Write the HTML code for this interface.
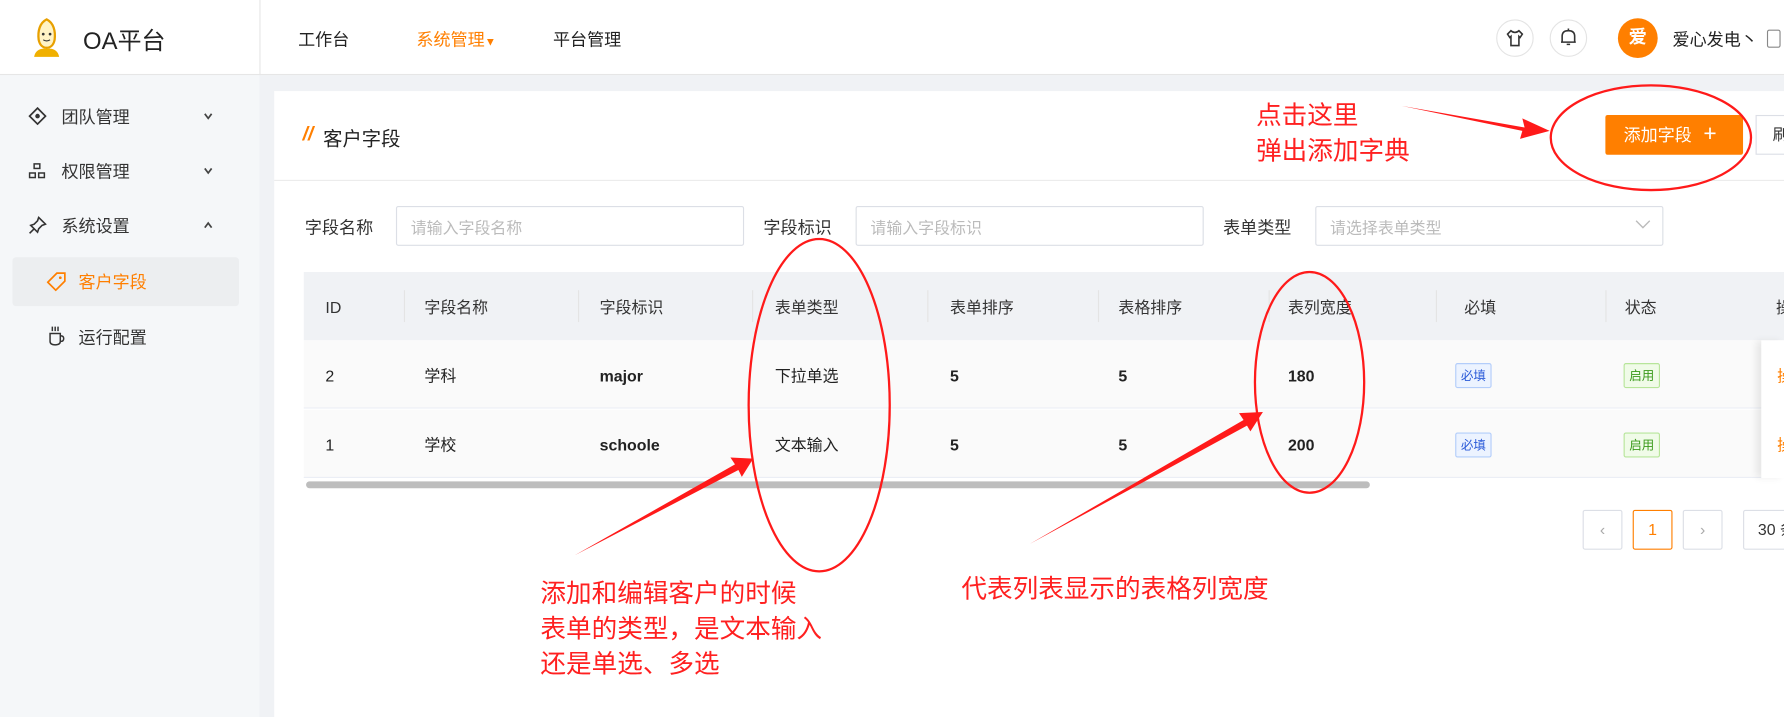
<!DOCTYPE html>
<html><head><meta charset="utf-8"><style>
*{margin:0;padding:0;box-sizing:border-box}
html,body{width:1784px;height:717px;overflow:hidden;background:#fff}
body{font-family:"Liberation Sans","Noto Sans CJK SC",sans-serif;color:#333}
#w{position:absolute;left:0;top:0;width:1568px;height:630px;transform:scale(1.13776,1.1381);transform-origin:0 0;background:#f0f2f5;overflow:hidden}
.a{position:absolute;white-space:nowrap}
.hdr{left:0;top:0;width:1568px;height:66px;background:#fff;border-bottom:1px solid #e6e6e6}
.nav{font-size:15px;top:24px;color:#222}
.side{left:0;top:66px;width:228px;height:564px;background:#f5f7f9}
.si{font-size:15px;color:#333;left:54px}
.chev{left:178px;width:10px;height:10px}
.card{left:241px;top:80px;width:1327px;height:550px;background:#fff}
.lbl{font-size:15px;color:#333;top:189px}
.inp{top:181px;height:35px;border:1px solid #dcdfe6;border-radius:2px;background:#fff;font-size:14px;color:#bbb;padding:8px 12px}
.th{font-size:14px;color:#333;top:260px;line-height:20px}
.sep{top:255px;width:1px;height:28px;background:#e4e4e4}
.td{font-size:14px;color:#222;line-height:20px;height:20px}
.tag{font-size:11px;padding:2px 4px;border-radius:2px;border:1px solid}
.red{color:#ff2020;font-size:22.5px;line-height:30px}
.pg{top:448px;width:35px;height:35px;border:1px solid #dcdfe6;border-radius:2px;text-align:center;line-height:33px;font-size:14px;color:#aaa}
</style></head><body><div id="w">
<div class="a hdr"></div>
<svg class="a" style="left:27px;top:15px" width="28" height="36" viewBox="0 0 28 36"><path d="M14 2 C8 5 6 12 7 20 C8 25 11 27 14 27 C17 27 20 25 21 20 C22 12 20 5 14 2Z" fill="#fff3c6" stroke="#e8a000" stroke-width="2"/><path d="M3 35 C4 29 9 27 14 28 C19 27 24 29 25 35Z" fill="#f0b000"/><circle cx="11" cy="15" r="1.2" fill="#333"/><circle cx="17" cy="15" r="1.2" fill="#333"/><path d="M11 20 Q14 22 17 20" stroke="#333" fill="none"/></svg>
<div class="a" style="left:73px;top:20px;font-size:21px;color:#222">OA平台</div>
<div class="a" style="left:228px;top:0;width:1px;height:66px;background:#e6e6e6"></div>
<div class="a nav" style="left:262px">工作台</div>
<div class="a nav" style="left:366px;color:#ff7f00">系统管理<span style="font-size:10px">▼</span></div>
<div class="a nav" style="left:486px">平台管理</div>
<div class="a" style="left:1315px;top:17px;width:33px;height:33px;border:1px solid #e4e4e4;border-radius:50%"></div>
<svg class="a" style="left:1323px;top:25px" width="17" height="17" viewBox="0 0 17 17"><path d="M5 2 L2 5 L4 8 L5 7 V15 H12 V7 L13 8 L15 5 L12 2 Q8.5 5 5 2Z" fill="none" stroke="#333" stroke-width="1.4"/></svg>
<div class="a" style="left:1362px;top:17px;width:33px;height:33px;border:1px solid #e4e4e4;border-radius:50%"></div>
<svg class="a" style="left:1370px;top:24px" width="17" height="18" viewBox="0 0 17 18"><path d="M3 13 V8 Q3 3 8.5 3 Q14 3 14 8 V13 H15 H2Z M8.5 1 V3 M7 15 H10" fill="none" stroke="#333" stroke-width="1.4"/></svg>
<div class="a" style="left:1422px;top:16px;width:35px;height:35px;border-radius:50%;background:#ff7f00;color:#fff;font-weight:bold;font-size:16px;text-align:center;line-height:35px">爱</div>
<div class="a" style="left:1470px;top:24px;font-size:15px;color:#222">爱心发电丶</div>
<div class="a" style="left:1553px;top:26px;width:12px;height:16px;border:1px solid #888;border-radius:2px"></div>

<div class="a side"></div>
<svg class="a" style="left:25px;top:94px" width="16" height="16" viewBox="0 0 16 16"><path d="M8 1 L15 8 L8 15 L1 8Z" fill="none" stroke="#333" stroke-width="1.5"/><circle cx="8" cy="8" r="2" fill="#333"/></svg>
<div class="a si" style="top:92px">团队管理</div>
<svg class="a chev" style="top:97px" viewBox="0 0 10 10"><path d="M2 3 L5 7 L8 3" fill="none" stroke="#444" stroke-width="1.5"/></svg>
<svg class="a" style="left:25px;top:143px" width="15" height="15" viewBox="0 0 15 15"><rect x="5" y="1" width="5" height="4" fill="none" stroke="#333" stroke-width="1.3"/><rect x="1" y="9" width="5" height="4" fill="none" stroke="#333" stroke-width="1.3"/><rect x="9" y="9" width="5" height="4" fill="none" stroke="#333" stroke-width="1.3"/></svg>
<div class="a si" style="top:140px">权限管理</div>
<svg class="a chev" style="top:145px" viewBox="0 0 10 10"><path d="M2 3 L5 7 L8 3" fill="none" stroke="#444" stroke-width="1.5"/></svg>
<svg class="a" style="left:25px;top:190px" width="16" height="16" viewBox="0 0 16 16"><path d="M9 1 L15 7 L12 8 L9 11 L8 14 L2 8 L5 7 L8 4Z M5 11 L1 15" fill="none" stroke="#333" stroke-width="1.4"/></svg>
<div class="a si" style="top:188px">系统设置</div>
<svg class="a chev" style="top:193px" viewBox="0 0 10 10"><path d="M2 7 L5 3 L8 7" fill="none" stroke="#444" stroke-width="1.5"/></svg>
<div class="a" style="left:11px;top:226px;width:199px;height:43px;background:#eceef0;border-radius:3px"></div>
<svg class="a" style="left:41px;top:239px" width="17" height="17" viewBox="0 0 17 17"><path d="M9 1 H16 V8 L8 16 L1 9Z" fill="none" stroke="#ff7f00" stroke-width="1.5"/><circle cx="12" cy="5" r="1.2" fill="#ff7f00"/></svg>
<div class="a si" style="top:237px;left:69px;color:#ff7f00">客户字段</div>
<svg class="a" style="left:42px;top:286px" width="15" height="18" viewBox="0 0 15 18"><path d="M2 7 H11 V14 Q11 17 6.5 17 Q2 17 2 14Z M11 9 Q14 9 14 11.5 Q14 14 11 14 M4 1 V5 M6.5 1 V5 M9 1 V5" fill="none" stroke="#333" stroke-width="1.3"/></svg>
<div class="a si" style="top:286px;left:69px">运行配置</div>

<div class="a card"></div>
<div class="a" style="left:266px;top:108px;font-size:17px;color:#ff7f00;font-weight:bold;font-style:italic">//</div>
<div class="a" style="left:284px;top:108px;font-size:17px;color:#222">客户字段</div>
<div class="a" style="left:241px;top:158px;width:1327px;height:1px;background:#ebebeb"></div>
<div class="a" style="left:1411px;top:101px;width:121px;height:35px;background:#ff7f00;border-radius:2px;color:#fff;font-size:15px;line-height:35px;padding-left:16px">添加字段 <span style="font-size:20px;font-weight:300;margin-left:6px">+</span></div>
<div class="a" style="left:1543px;top:101px;width:40px;height:35px;border:1px solid #dcdfe6;font-size:14px;line-height:33px;padding-left:14px;color:#333">刷</div>

<div class="a lbl" style="left:268px">字段名称</div>
<div class="a inp" style="left:348px;width:306px">请输入字段名称</div>
<div class="a lbl" style="left:671px">字段标识</div>
<div class="a inp" style="left:752px;width:306px">请输入字段标识</div>
<div class="a lbl" style="left:1075px">表单类型</div>
<div class="a inp" style="left:1156px;width:306px">请选择表单类型<svg style="position:absolute;right:10px;top:10px" width="14" height="10" viewBox="0 0 14 10"><path d="M1 2 L7 8 L13 2" fill="none" stroke="#bbb" stroke-width="1.2"/></svg></div>

<div class="a" style="left:267px;top:239px;width:1301px;height:60px;background:#f0f2f5"></div>
<div class="a" style="left:267px;top:299px;width:1301px;height:60px;background:#fafafa;border-bottom:1px solid #ebeef5"></div>
<div class="a" style="left:267px;top:360px;width:1301px;height:60px;background:#fafafa;border-bottom:1px solid #ebeef5"></div>
<div class="a" style="left:1548px;top:299px;width:20px;height:121px;background:#fff;box-shadow:-4px 0 6px rgba(0,0,0,0.08)"></div>
<div class="a th" style="left:286px">ID</div>
<div class="a sep" style="left:355px"></div><div class="a th" style="left:373px">字段名称</div>
<div class="a sep" style="left:508px"></div><div class="a th" style="left:527px">字段标识</div>
<div class="a sep" style="left:661px"></div><div class="a th" style="left:681px">表单类型</div>
<div class="a sep" style="left:815px"></div><div class="a th" style="left:835px">表单排序</div>
<div class="a sep" style="left:965px"></div><div class="a th" style="left:983px">表格排序</div>
<div class="a sep" style="left:1115px"></div><div class="a th" style="left:1132px">表列宽度</div>
<div class="a sep" style="left:1262px"></div><div class="a th" style="left:1287px">必填</div>
<div class="a sep" style="left:1411px"></div><div class="a th" style="left:1428px">状态</div>
<div class="a th" style="left:1561px">操</div>

<div class="a td" style="left:286px;top:320px">2</div><div class="a td" style="left:373px;top:320px">学科</div><div class="a td" style="left:527px;top:320px;font-weight:bold">major</div><div class="a td" style="left:681px;top:320px">下拉单选</div><div class="a td" style="left:835px;top:320px;font-weight:bold">5</div><div class="a td" style="left:983px;top:320px;font-weight:bold">5</div><div class="a td" style="left:1132px;top:320px;font-weight:bold">180</div>
<div class="a tag" style="left:1279px;top:319px;color:#2a5ad8;background:#ecf3ff;border-color:#b3cdfa">必填</div>
<div class="a tag" style="left:1427px;top:319px;color:#3a9a1a;background:#f0fbe8;border-color:#b7e59a">启用</div>
<div class="a td" style="left:1562px;top:320px;color:#ff7f00">操</div>
<div class="a td" style="left:286px;top:381px">1</div><div class="a td" style="left:373px;top:381px">学校</div><div class="a td" style="left:527px;top:381px;font-weight:bold">schoole</div><div class="a td" style="left:681px;top:381px">文本输入</div><div class="a td" style="left:835px;top:381px;font-weight:bold">5</div><div class="a td" style="left:983px;top:381px;font-weight:bold">5</div><div class="a td" style="left:1132px;top:381px;font-weight:bold">200</div>
<div class="a tag" style="left:1279px;top:380px;color:#2a5ad8;background:#ecf3ff;border-color:#b3cdfa">必填</div>
<div class="a tag" style="left:1427px;top:380px;color:#3a9a1a;background:#f0fbe8;border-color:#b7e59a">启用</div>
<div class="a td" style="left:1562px;top:381px;color:#ff7f00">操</div>
<div class="a" style="left:269px;top:423px;width:935px;height:6px;border-radius:3px;background:#bdbdbd"></div>

<div class="a pg" style="left:1391px">&lsaquo;</div>
<div class="a pg" style="left:1435px;border-color:#ff7f00;color:#ff7f00">1</div>
<div class="a pg" style="left:1479px">&rsaquo;</div>
<div class="a pg" style="left:1532px;width:60px;color:#333;text-align:left;padding-left:12px">30 条</div>

<div class="a red" style="left:1104px;top:87px">点击这里</div>
<div class="a red" style="left:1104px;top:118px">弹出添加字典</div>
<div class="a red" style="left:475px;top:507px">添加和编辑客户的时候</div>
<div class="a red" style="left:475px;top:538px">表单的类型，是文本输入</div>
<div class="a red" style="left:475px;top:569px">还是单选、多选</div>
<div class="a red" style="left:845px;top:503px">代表列表显示的表格列宽度</div>
<svg class="a" style="left:0;top:0" width="1568" height="630" viewBox="0 0 1568 630">
<g fill="none" stroke="#ff1a1a" stroke-width="2">
<ellipse cx="1451" cy="121" rx="88" ry="46"/>
<ellipse cx="720" cy="356" rx="62" ry="146"/>
<ellipse cx="1151" cy="336" rx="48" ry="97"/>
</g>
<g fill="#ff1a1a">
<path d="M1232 93 L1340 112 L1338 104 L1362 115 L1336 122 L1338 115Z"/>
<path d="M505 488 L646 408 L642 402 L662 403 L652 419 L649 413Z"/>
<path d="M905 478 L1093 369 L1089 363 L1110 362 L1099 379 L1096 374Z"/>
</g></svg>
</div></body></html>
